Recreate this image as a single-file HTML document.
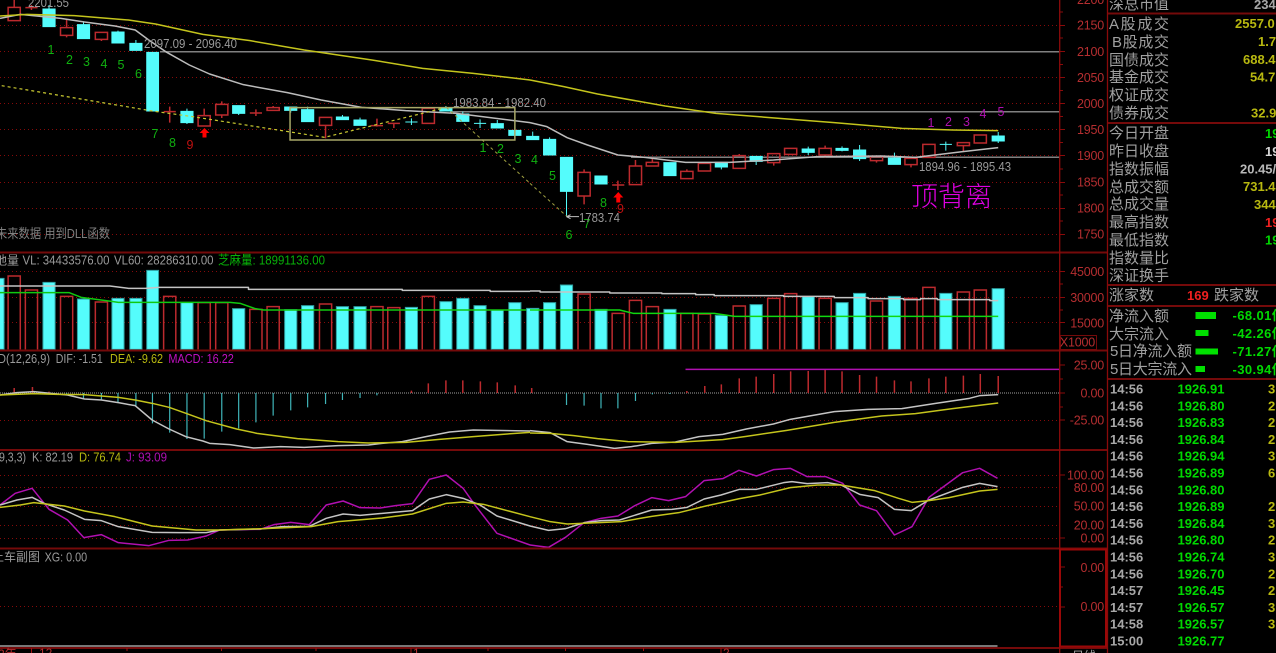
<!DOCTYPE html>
<html><head><meta charset="utf-8"><style>
html,body{margin:0;padding:0;background:#000;width:1276px;height:653px;overflow:hidden}
svg{display:block;font-family:"Liberation Sans","Noto Sans CJK SC",sans-serif}
.g{stroke:#860a0a;stroke-width:1;stroke-dasharray:1 3;fill:none}
.b{stroke:#750a0a;stroke-width:2;fill:none}
.l{fill:none;stroke-width:1.500;vector-effect:non-scaling-stroke;stroke-linejoin:round}
.r{fill:none;stroke:#bc2a2e;stroke-width:1.500;vector-effect:non-scaling-stroke}
.c{fill:#54fcfc;stroke:#54fcfc;stroke-width:1;vector-effect:non-scaling-stroke}
.vc{fill:#54fcfc;stroke:#2f9fa0;stroke-width:1;vector-effect:non-scaling-stroke}
.st{fill:none;stroke:#3fb4b8;stroke-width:1.200;vector-effect:non-scaling-stroke}
.ax text{fill:#b52e30;font-size:12.500px;letter-spacing:-.2px;text-anchor:end}
.t{fill:#9a9a9a;font-size:13px}
.lb{fill:#a0a0a0;font-size:15px}
.v{font-size:13px;font-weight:bold}
.f{letter-spacing:.4px}
.n{font-size:12.500px;text-anchor:middle}
</style></head><body>
<svg width="1276" height="653" viewBox="0 0 1276 653" xmlns="http://www.w3.org/2000/svg">
<rect width="1276" height="653" fill="#000"/>
<!-- grid -->
<path class="g" d="M0 25.500H1060M0 51.500H1060M0 77.500H1060M0 103.500H1060M0 129.500H1060M0 155.500H1060M0 182.500H1060M0 208.500H1060M0 234.500H1060M0 271.500H1060M0 297.500H1060M0 322.500H1060M0 420.500H1060M0 475.500H1060M0 487.500H1060M0 506.500H1060M0 525.500H1060M0 538.500H1060M0 606.500H1060"/>
<path d="M160 51.700H1060M450 111.700H1060M631 157.300H1060" stroke="#808080" stroke-width="1.500" fill="none"/>
<path d="M0 393H1060" stroke="#808080" stroke-width="1.200" stroke-dasharray="1 1" fill="none"/>

<!-- main candles left -->
<g transform="scale(.33806,.33333)">
<path class="r" d="M24 22H60V62H24ZM42 0V22M75 23H111M93 15V30M179 83H215V106H179ZM197 58V83M197 106V112M282 97H318V118H282ZM300 118V123M484 335H520M502 320V368M586 347H622V378H586ZM604 326V347M638 313H674V345H638ZM656 304V313M656 345V354M739 339H775M757 328V348M790 323H826V331H790ZM808 318V323M945 352H981V376H945ZM963 376V415M1097 377H1133M1115 356V380M1147 370H1183M1165 370V384M1249 325H1285V370H1249ZM1267 322V325"/>
<path class="c" d="M127 27H163V80H127ZM145 15V27M229 74H265V116H229ZM247 64V74M331 96H367V129H331ZM349 92V96M384 130H420V151H384ZM402 120V130M434 157H469V333H434ZM535 334H571V368H535ZM553 326V334M553 368V372M688 317H724V340H688ZM706 340V345M842 321H878V331H842ZM860 331V338M892 329H928V365H892ZM910 320V329M995 351H1031V359H995ZM1013 345V351M1047 360H1083V376H1047ZM1065 353V360M1199 366H1235M1217 355V375M1301 325H1337V333H1301ZM1319 318V325M1351 342H1387V364H1351ZM1369 335V342M1402 370H1438M1420 358V384M1453 371H1489V384H1453ZM1471 360V371M1505 391H1541V406H1505ZM1523 406V412"/>
</g>
<!-- main candles right -->
<g transform="translate(530,0) scale(.33806,.33333)">
<path class="r" d="M142 517H178V588H142ZM160 508V517M160 588V613M243 555H279M260 542V570M294 498H330V554H294ZM312 480V498M344 487H380V498H344ZM362 472V487M446 514H482V536H446ZM464 508V514M498 490H534V513H498ZM601 467H637V505H601ZM619 462V467M703 461H739V488H703ZM721 488V497M753 445H789V463H753ZM855 445H891V465H855ZM873 437V445M873 465V473M1007 470H1043V482H1007ZM1025 482V488M1109 475H1145V494H1109ZM1127 494V502M1162 433H1198V472H1162ZM1264 428H1300V437H1264ZM1282 437V456M1314 405H1350V429H1314Z"/>
<path class="c" d="M-10 409H26V419H-10ZM8 395V409M40 418H76V465H40ZM58 412V418M90 472H126V574H90ZM108 574V650M192 528H228V552H192ZM396 488H432V527H396ZM548 487H584V501H548ZM566 501V508M651 469H687V484H651ZM669 484V495M805 447H841V457H805ZM823 440V465M905 445H941V451H905ZM923 439V454M957 450H993V476H957ZM975 435V483M1060 474H1096V493H1060ZM1078 458V474M1212 433H1248M1230 425V452M1367 408H1403V423H1367ZM1385 396V429"/>
</g>
<!-- main MA lines -->
<g transform="scale(.33806,.33333)">
<path class="l" stroke="#bcbcbc" d="M0 55L60 43L180 55L250 66L340 78L400 90L440 120L490 155L560 195L620 222L720 254L850 278L950 300L1070 322L1200 332L1350 340L1568 368"/>
<path class="l" stroke="#c4c41c" d="M0 48L80 43L220 47L380 60L460 72L600 103L740 122L900 150L1100 180L1250 205L1400 220L1568 240"/>
<path fill="none" stroke="#c8c830" stroke-width="1.200" stroke-dasharray="3 3" vector-effect="non-scaling-stroke" d="M5 257L450 333L570 350L960 412L1250 340L1320 322"/>
<path fill="none" stroke="#a0a040" stroke-width="1" stroke-dasharray="3 3" vector-effect="non-scaling-stroke" d="M1320 322L1568 550"/>
<rect x="858" y="323" width="665" height="97" fill="none" stroke="#a8a868" stroke-width="1.500" vector-effect="non-scaling-stroke"/>
</g>
<g transform="translate(530,0) scale(.33806,.33333)">
<path class="l" stroke="#bcbcbc" d="M0 368L50 380L110 413L170 435L260 465L340 472L460 487L590 487L720 480L850 470L1040 468L1140 472L1280 455L1385 443"/>
<path class="l" stroke="#c4c41c" d="M0 240L100 260L200 282L400 318L550 340L700 352L900 368L1100 385L1250 390L1385 392"/>
<path fill="none" stroke="#a0a040" stroke-width="1" stroke-dasharray="3 3" vector-effect="non-scaling-stroke" d="M0 550L110 650"/>
<path fill="none" stroke="#c0c0c0" stroke-width="1" vector-effect="non-scaling-stroke" d="M108 650H145M108 650L120 644M108 650L120 656"/>
</g>
<!-- red arrows -->
<path fill="#f00" d="M204.500 128L209.500 133H206.500V137.500H202.500V133H199.500Z"/>
<path fill="#f00" d="M618.300 192L623.300 197.500H620.300V202.500H616.300V197.500H613.300Z"/>
<!-- digit labels -->
<g class="n" fill="#10b010">
<text x="51" y="54">1</text><text x="69.500" y="64">2</text><text x="86.500" y="66">3</text><text x="104" y="68">4</text><text x="121" y="69">5</text><text x="138.500" y="78">6</text><text x="155" y="138">7</text><text x="172.500" y="147">8</text><text x="483" y="152">1</text><text x="500.500" y="153">2</text><text x="518" y="163">3</text><text x="534.500" y="164">4</text><text x="552.500" y="180">5</text><text x="569" y="239">6</text><text x="587" y="228">7</text><text x="603.500" y="207">8</text>
</g>
<g class="n" fill="#c01010"><text x="190" y="149">9</text><text x="620.500" y="213">9</text></g>
<g class="n" fill="#b010b0"><text x="931" y="127">1</text><text x="948.500" y="126">2</text><text x="966.500" y="126">3</text><text x="983" y="118">4</text><text x="1001" y="116">5</text></g>
<!-- price text -->
<g class="t">
<text x="28" y="7" textLength="41" lengthAdjust="spacingAndGlyphs">2201.55</text>
<text x="144" y="48" textLength="93" lengthAdjust="spacingAndGlyphs">2097.09 - 2096.40</text>
<text x="453" y="107" textLength="93" lengthAdjust="spacingAndGlyphs">1983.84 - 1982.40</text>
<text x="579" y="222" textLength="41" lengthAdjust="spacingAndGlyphs">1783.74</text>
<text x="919" y="171" textLength="92" lengthAdjust="spacingAndGlyphs">1894.96 - 1895.43</text>
<text x="-4" y="238" textLength="114" lengthAdjust="spacingAndGlyphs" style="fill:#808080">未来数据 用到DLL函数</text>
</g>
<text x="911" y="206" fill="#e000e0" font-size="27" textLength="81" style="font-family:'Noto Sans CJK SC',sans-serif;font-weight:300">顶背离</text>

<!-- volume -->
<g transform="translate(0,250) scale(.33806,.33333)">
<path class="vc" d="M-24 85H12V298H-24ZM127 97H163V298H127ZM229 147H265V298H229ZM331 145H367V298H331ZM384 145H420V298H384ZM434 61H469V298H434ZM535 157H571V298H535ZM688 176H724V298H688ZM842 179H878V298H842ZM892 167H928V298H892ZM995 170H1031V298H995ZM1047 170H1083V298H1047ZM1199 172H1235V298H1199ZM1301 155H1337V298H1301ZM1351 145H1387V298H1351ZM1402 167H1438V298H1402ZM1453 180H1489V298H1453ZM1505 158H1541V298H1505Z"/>
<path class="r" d="M24 298V78H60V298M75 298V120H111V298M179 298V139H215V298M282 298V156H318V298M484 298V139H520V298M586 298V158H622V298M638 298V158H674V298M739 298V178H775V298M790 298V170H826V298M945 298V162H981V298M1097 298V170H1133V298M1147 298V173H1183V298M1249 298V139H1285V298"/>
<path class="l" stroke="#c4c4c4" d="M0 108H325L380 115H430L470 112H735V118H1190V121H1450V124H1568"/>
<path class="l" stroke="#10c810" d="M0 128H205L240 142L330 154L350 157H680L710 160L755 176L780 180H1568"/>
</g>
<g transform="translate(530,250) scale(.33806,.33333)">
<path class="vc" d="M-10 175H26V298H-10ZM40 158H76V298H40ZM90 105H126V298H90ZM192 178H228V298H192ZM396 178H432V298H396ZM548 196H584V298H548ZM651 164H687V298H651ZM805 140H841V298H805ZM905 158H941V298H905ZM957 130H993V298H957ZM1060 139H1096V298H1060ZM1212 130H1248V298H1212ZM1367 116H1403V298H1367Z"/>
<path class="r" d="M142 298V132H178V298M243 298V190H279V298M294 298V151H330V298M344 298V170H380V298M446 298V190H482V298M498 298V192H534V298M601 298V168H637V298M703 298V145H739V298M753 298V131H789V298M855 298V145H891V298M1007 298V153H1043V298M1109 298V145H1145V298M1162 298V112H1198V298M1264 298V126H1300V298M1314 298V120H1350V298"/>
<path class="l" stroke="#c4c4c4" d="M0 123H30V126H236V129H390V131H490V134H545V137H750V139H900V143H1000V146H1105V149H1155V146H1205V149H1360V152H1385"/>
<path class="l" stroke="#10d810" d="M0 180H265L305 190H545L605 199H1385"/>
</g>
<text class="t" x="-5" y="264.500" style="fill:#a0a0a0;font-size:12px">地量</text>
<text class="t" x="22.500" y="264.500" textLength="87" lengthAdjust="spacingAndGlyphs">VL: 34433576.00</text>
<text class="t" x="114" y="264.500" textLength="99.500" lengthAdjust="spacingAndGlyphs">VL60: 28286310.00</text>
<text x="218" y="264.500" fill="#08b008" font-size="13" textLength="107" lengthAdjust="spacingAndGlyphs">芝麻量: 18991136.00</text>

<!-- MACD -->
<text class="t" x="-2" y="363" textLength="52" lengthAdjust="spacingAndGlyphs">D(12,26,9)</text>
<text class="t" x="55.800" y="363" textLength="47" lengthAdjust="spacingAndGlyphs">DIF: -1.51</text>
<text x="110" y="363" fill="#b8b810" font-size="13" textLength="53" lengthAdjust="spacingAndGlyphs">DEA: -9.62</text>
<text x="168.400" y="363" fill="#c010c0" font-size="13" textLength="65.500" lengthAdjust="spacingAndGlyphs">MACD: 16.22</text>
<g transform="translate(0,250) scale(.33806,.33333)">
<path class="r" d="M42 414V429M96 411V429M145 425V429M1217 422V429M1267 400V429M1319 391V429M1369 391V429M1421 394V429M1471 397V429M1524 406V429"/>
<path class="st" d="M197 429V435M247 429V445M300 429V448M349 429V458M402 429V470M451 429V520M502 429V548M553 429V567M604 429V566M656 429V545M706 429V535M757 429V517M808 429V497M860 429V481M910 429V472M963 429V462M1013 429V450M1065 429V444M1115 429V436"/>
<path class="l" stroke="#c4c4c4" d="M0 435L50 428L100 425L150 430L200 435L250 447L300 450L350 458L400 467L450 510L500 537L550 560L600 573L620 580L680 584L750 594L830 590L900 592L1000 587L1090 585L1130 580L1190 575L1260 560L1330 546L1400 540L1568 543"/>
<path class="l" stroke="#c4c41c" d="M0 435L100 431L170 433L250 434L350 442L400 450L450 460L500 472L550 490L610 512L700 537L760 550L880 566L1000 575L1090 579L1200 577L1300 568L1400 560L1500 552L1568 547"/>
</g>
<g transform="translate(530,250) scale(.33806,.33333)">
<path class="r" d="M5 414V429M464 423V429M517 408V429M566 403V429M619 385V429M669 380V429M721 372V429M771 364V429M823 363V429M873 360V429M923 364V429M975 375V429M1025 380V429M1078 391V429M1127 394V429M1180 385V429M1230 380V429M1282 377V429M1332 372V429M1385 378V429"/>
<path class="st" d="M108 429V465M160 429V467M210 429V475M260 429V475M312 429V453M362 429V433M414 429V432"/>
<path class="l" stroke="#b010b0" d="M460 358H1568"/>
<path class="l" stroke="#c4c4c4" d="M0 542L60 548L110 575L170 583L250 595L300 590L360 580L430 576L500 560L570 553L640 537L720 522L770 508L900 485L1000 478L1100 476L1200 460L1300 445L1330 437L1385 434"/>
<path class="l" stroke="#c4c41c" d="M0 549L60 550L130 557L200 566L290 575L430 577L570 569L640 559L760 541L900 517L1040 498L1140 491L1250 476L1385 459"/>
</g>

<!-- KDJ -->
<text class="t" x="-1" y="461.500" textLength="27" lengthAdjust="spacingAndGlyphs">9,3,3)</text>
<text class="t" x="32" y="461.500" textLength="41" lengthAdjust="spacingAndGlyphs">K: 82.19</text>
<text x="79" y="461.500" fill="#b8b810" font-size="13" textLength="42" lengthAdjust="spacingAndGlyphs">D: 76.74</text>
<text x="126" y="461.500" fill="#b010b0" font-size="13" textLength="41" lengthAdjust="spacingAndGlyphs">J: 93.09</text>
<g transform="translate(0,450) scale(.33806,.33333)">
<path class="l" stroke="#b010b0" d="M0 165L45 130L95 115L145 178L200 210L248 263L300 254L350 278L440 287L500 271L555 270L610 258L650 240L770 238L810 224L860 217L915 224L965 165L1015 153L1065 173L1125 174L1170 167L1220 161L1270 88L1320 75L1370 115L1405 165L1470 250L1568 285"/>
<path class="l" stroke="#c4c4c4" d="M0 165L50 150L95 142L130 160L190 180L250 208L300 212L350 230L450 247L530 248L610 248L650 240L770 237L835 230L915 229L965 205L1015 192L1065 196L1220 182L1270 147L1320 134L1370 145L1420 165L1470 198L1568 228"/>
<path class="l" stroke="#c4c41c" d="M0 172L60 165L100 158L190 168L250 183L340 200L450 228L580 240L650 240L780 236L920 230L1000 215L1130 204L1220 192L1320 160L1370 156L1430 163L1568 200"/>
</g>
<g transform="translate(530,450) scale(.33806,.33333)">
<path class="l" stroke="#b010b0" d="M0 285L55 292L105 262L160 218L210 205L260 198L310 167L360 143L410 152L460 140L515 92L570 86L618 61L670 78L720 59L770 55L820 80L875 80L925 100L975 165L1025 182L1078 255L1130 230L1180 142L1280 68L1330 55L1383 85"/>
<path class="l" stroke="#c4c4c4" d="M0 228L55 241L105 236L160 218L210 212L265 210L360 180L420 178L465 172L515 147L565 135L620 118L670 118L750 98L775 95L820 101L880 98L920 105L975 133L1030 143L1078 178L1128 182L1180 150L1280 112L1330 100L1383 110"/>
<path class="l" stroke="#c4c41c" d="M0 200L60 215L110 222L270 215L360 199L440 188L520 168L620 146L680 135L770 113L850 105L920 105L1020 122L1090 145L1130 157L1180 152L1240 143L1330 123L1383 118"/>
</g>

<!-- XG -->
<text class="t" x="-8" y="561" style="font-size:12px">上车副图</text>
<text class="t" x="44.600" y="561.500" textLength="42.500" lengthAdjust="spacingAndGlyphs">XG: 0.00</text>
<path d="M0 646H997.500" stroke="#a0a0a0" stroke-width="1.500" fill="none"/>

<!-- panel borders -->
<path class="b" d="M0 252.500H1107M0 350.500H1107M0 450H1107M0 548.500H1107M0 648H1107"/>
<path d="M1059.700 0V653M1107.500 0V653" stroke="#8a0a0a" stroke-width="1.300" fill="none"/>
<!-- axis ticks -->
<path stroke="#8a0a0a" stroke-width="1" fill="none" d="M1060 25.500H1065M1060 51.500H1065M1060 77.500H1065M1060 103.500H1065M1060 129.500H1065M1060 155.500H1065M1060 182.500H1065M1060 208.500H1065M1060 234.500H1065M1060 12H1063M1060 38H1063M1060 64.500H1063M1060 90.500H1063M1060 116.500H1063M1060 142.500H1063M1060 169H1063M1060 195H1063M1060 221H1063M1060 271.500H1065M1060 297.500H1065M1060 322.500H1065M1060 284H1063M1060 310H1063M1060 365H1065M1060 393H1065M1060 420H1065M1060 379H1063M1060 407H1063M1060 475H1065M1060 538H1065M1060 567H1065M1060 587H1063M1060 607H1065"/>
<rect x="1060" y="549.500" width="46" height="97" fill="none" stroke="#9a0808" stroke-width="2"/>
<rect x="1060.500" y="335.500" width="36" height="14" fill="none" stroke="#750a0a" stroke-width="1"/>
<g class="ax">
<text x="1104" y="4">2200</text>
<text x="1104" y="29.500">2150</text><text x="1104" y="56">2100</text><text x="1104" y="82">2050</text><text x="1104" y="108">2000</text><text x="1104" y="134">1950</text><text x="1104" y="160">1900</text><text x="1104" y="186.500">1850</text><text x="1104" y="212.500">1800</text><text x="1104" y="238.500">1750</text>
<text x="1104" y="276">45000</text><text x="1104" y="302">30000</text><text x="1104" y="327.500">15000</text>
<text x="1095" y="346.500">X1000</text>
<text x="1104" y="369.500">25.00</text><text x="1104" y="397.500">0.00</text><text x="1104" y="424.500">-25.00</text>
<text x="1104" y="479.500">100.00</text><text x="1104" y="492">80.00</text><text x="1104" y="510.500">50.00</text><text x="1104" y="529.500">20.00</text><text x="1104" y="542.500">0.00</text>
<text x="1104" y="572">0.00</text><text x="1104" y="611">0.00</text>
</g>
<text x="1072" y="660" fill="#a0a0a0" font-size="12">日线</text>
<!-- time axis -->
<path stroke="#a01010" stroke-width="1" fill="none" d="M31.500 648V653M127 648V651M221.500 648V651M316 648V651M411 648V653M488 648V651M565.500 648V651M643.500 648V651M721 648V653"/>
<text x="39" y="657" font-size="12" fill="#b52e30">12</text>
<text x="413" y="657" font-size="12" fill="#b52e30">1</text>
<text x="723" y="657" font-size="12" fill="#b52e30">2</text>
<text x="-2" y="658" font-size="12" fill="#b52e30">2年</text>

<!-- right panel -->
<path class="b" d="M1108 13.500H1276M1108 123H1276M1108 285H1276M1108 306H1276M1108 379H1276"/>
<g class="lb" transform="translate(0,-1)">
<text x="1109" y="10">深总市值</text>
<text x="1109" y="30" textLength="60">A股成交</text>
<text x="1112" y="48" textLength="57">B股成交</text>
<text x="1109" y="66">国债成交</text>
<text x="1109" y="83">基金成交</text>
<text x="1109" y="101">权证成交</text>
<text x="1109" y="119">债券成交</text>
<text x="1109" y="139">今日开盘</text>
<text x="1109" y="157">昨日收盘</text>
<text x="1109" y="175">指数振幅</text>
<text x="1109" y="193">总成交额</text>
<text x="1109" y="210">总成交量</text>
<text x="1109" y="228">最高指数</text>
<text x="1109" y="246">最低指数</text>
<text x="1109" y="264">指数量比</text>
<text x="1109" y="281.500">深证换手</text>
<text x="1109" y="301">涨家数</text>
<text x="1214" y="301">跌家数</text>
<text x="1109" y="322">净流入额</text>
<text x="1109" y="340">大宗流入</text>
<text x="1110" y="357" textLength="82">5日净流入额</text>
<text x="1110" y="375" textLength="82">5日大宗流入</text>
</g>
<g class="v">
<text x="1254" y="9" fill="#a8a8a8">234</text>
<text x="1235" y="28" fill="#b8b810">2557.0</text>
<text x="1258" y="46" fill="#b8b810">1.7</text>
<text x="1243" y="64" fill="#b8b810">688.4</text>
<text x="1250" y="81.500" fill="#b8b810">54.7</text>
<text x="1251" y="117.500" fill="#b8b810">32.9</text>
<text x="1265" y="138" fill="#00d800">19</text>
<text x="1265" y="156" fill="#d8d8d8">19</text>
<text x="1240" y="173.500" fill="#b8b8b8">20.45/</text>
<text x="1243" y="191" fill="#b8b810">731.4</text>
<text x="1254" y="209" fill="#b8b810">344</text>
<text x="1265" y="227" fill="#f02020">19</text>
<text x="1265" y="244.500" fill="#00d800">19</text>
<text x="1187" y="300" fill="#f02020">169</text>
<text class="f" x="1232.500" y="320" fill="#00d800">-68.01亿</text>
<text class="f" x="1232.500" y="338" fill="#00d800">-42.26亿</text>
<text class="f" x="1232.500" y="356" fill="#00d800">-71.27亿</text>
<text class="f" x="1232.500" y="374" fill="#00d800">-30.94亿</text>
</g>
<path fill="#00e000" d="M1195.500 312H1216V319H1195.500ZM1195.500 330H1208.500V336H1195.500ZM1195.500 348.500H1218V354.500H1195.500ZM1195.500 366H1205V372H1195.500Z"/>
<!-- trades -->
<g class="v" fill="#a8a8a8" transform="translate(0,-.5)">
<text x="1110" y="394">14:56</text><text x="1110" y="410.800">14:56</text><text x="1110" y="427.600">14:56</text><text x="1110" y="444.400">14:56</text><text x="1110" y="461.200">14:56</text><text x="1110" y="478">14:56</text><text x="1110" y="494.800">14:56</text><text x="1110" y="511.600">14:56</text><text x="1110" y="528.400">14:56</text><text x="1110" y="545.200">14:56</text><text x="1110" y="562">14:56</text><text x="1110" y="578.800">14:56</text><text x="1110" y="595.600">14:57</text><text x="1110" y="612.400">14:57</text><text x="1110" y="629.200">14:58</text><text x="1110" y="646">15:00</text>
</g>
<g class="v" fill="#00d800" transform="translate(0,-.5)">
<text x="1177.500" y="394">1926.91</text><text x="1177.500" y="410.800">1926.80</text><text x="1177.500" y="427.600">1926.83</text><text x="1177.500" y="444.400">1926.84</text><text x="1177.500" y="461.200">1926.94</text><text x="1177.500" y="478">1926.89</text><text x="1177.500" y="494.800">1926.80</text><text x="1177.500" y="511.600">1926.89</text><text x="1177.500" y="528.400">1926.84</text><text x="1177.500" y="545.200">1926.80</text><text x="1177.500" y="562">1926.74</text><text x="1177.500" y="578.800">1926.70</text><text x="1177.500" y="595.600">1926.45</text><text x="1177.500" y="612.400">1926.57</text><text x="1177.500" y="629.200">1926.57</text><text x="1177.500" y="646">1926.77</text>
</g>
<g class="v" fill="#b8b810" transform="translate(0,-.5)">
<text x="1268" y="394">3</text><text x="1268" y="410.800">2</text><text x="1268" y="427.600">2</text><text x="1268" y="444.400">2</text><text x="1268" y="461.200">3</text><text x="1268" y="478">6</text><text x="1268" y="511.600">2</text><text x="1268" y="528.400">3</text><text x="1268" y="545.200">2</text><text x="1268" y="562">3</text><text x="1268" y="578.800">2</text><text x="1268" y="595.600">2</text><text x="1268" y="612.400">3</text><text x="1268" y="629.200">3</text>
</g>
</svg>
</body></html>
